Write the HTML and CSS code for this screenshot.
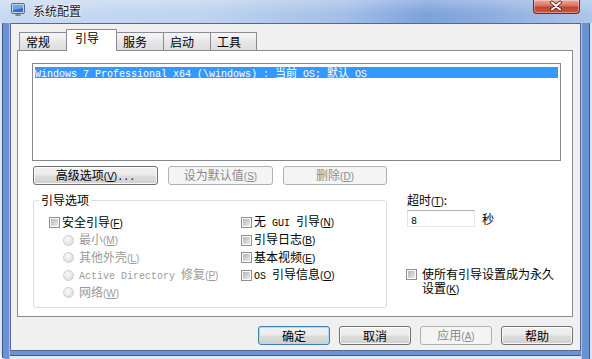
FILE: index.html
```html
<!DOCTYPE html>
<html lang="zh-CN">
<head>
<meta charset="utf-8">
<title>系统配置</title>
<link rel="stylesheet" href="styles.css">
</head>
<body>
<div class="win">
  <div class="titlebar">
    <svg class="appicon" width="14" height="14" viewBox="0 0 14 14">
      <rect x="0.5" y="0.5" width="13" height="10" rx="1.5" fill="#c9d2de" stroke="#5d6b80"/>
      <rect x="2" y="2" width="10" height="7" fill="#2f6fcf"/>
      <path d="M2 2h10v3L2 7z" fill="#6ea6ee"/>
      <path d="M5 11h4l1 2H4z" fill="#7f8a9a"/>
    </svg>
    <span class="title">系统配置</span>
    <div class="close">
      <svg width="47" height="14" viewBox="0 0 47 14">
        <path d="M19 3.5l8 7M27 3.5l-8 7" stroke="#5a1e16" stroke-width="3.6" stroke-linecap="round"/>
        <path d="M19 3.5l8 7M27 3.5l-8 7" stroke="#ffffff" stroke-width="2" stroke-linecap="round"/>
      </svg>
    </div>
  </div>
  <div class="panel">
    <div class="tabs">
      <div class="tab">常规</div>
      <div class="tab sel">引导</div>
      <div class="tab">服务</div>
      <div class="tab">启动</div>
      <div class="tab last">工具</div>
    </div>
    <div class="page">
      <div class="list">
        <div class="item"><span class="mono">Windows 7 Professional x64 (\windows) : </span>当前<span class="mono"> OS; </span>默认<span class="mono"> OS</span></div>
      </div>
      <div class="btnrow">
        <button class="btn w1">高级选项<span class="mn">(<u>V</u>)</span><span class="mono">...</span></button>
        <button class="btn dis w2">设为默认值<span class="mn">(<u>S</u>)</span></button>
        <button class="btn dis w3">删除<span class="mn">(<u>D</u>)</span></button>
      </div>
      <div class="lower">
        <fieldset class="group">
          <legend>引导选项</legend>
          <div class="cols">
            <div class="col1">
              <div class="row"><span class="cb"></span><span class="lbl">安全引导<span class="mn">(<u>F</u>)</span></span></div>
              <div class="row sub"><span class="rb"></span><span class="lbl gray">最小<span class="mn">(<u>M</u>)</span></span></div>
              <div class="row sub"><span class="rb"></span><span class="lbl gray">其他外壳<span class="mn">(<u>L</u>)</span></span></div>
              <div class="row sub"><span class="rb"></span><span class="lbl gray"><span class="mono">Active Directory </span>修复<span class="mn">(<u>P</u>)</span></span></div>
              <div class="row sub"><span class="rb"></span><span class="lbl gray">网络<span class="mn">(<u>W</u>)</span></span></div>
            </div>
            <div class="col2">
              <div class="row"><span class="cb"></span><span class="lbl">无<span class="mono"> GUI </span>引导<span class="mn">(<u>N</u>)</span></span></div>
              <div class="row"><span class="cb"></span><span class="lbl">引导日志<span class="mn">(<u>B</u>)</span></span></div>
              <div class="row"><span class="cb"></span><span class="lbl">基本视频<span class="mn">(<u>E</u>)</span></span></div>
              <div class="row"><span class="cb"></span><span class="lbl"><span class="mono">OS </span>引导信息<span class="mn">(<u>O</u>)</span></span></div>
            </div>
          </div>
        </fieldset>
        <div class="side">
          <div class="tlabel">超时<span class="mn">(<u>T</u>)</span>:</div>
          <div class="trow">
            <div class="input"><span class="mono">8</span></div>
            <span class="sec">秒</span>
          </div>
          <div class="perm">
            <span class="cb"></span>
            <span class="ptext"><span class="pl">使所有引导设置成为永久</span><span class="pl">设置<span class="mn">(<u>K</u>)</span></span></span>
          </div>
        </div>
      </div>
    </div>
    <div class="footer">
      <button class="btn fb def">确定</button>
      <button class="btn fb">取消</button>
      <button class="btn fb dis">应用<span class="mn">(<u>A</u>)</span></button>
      <button class="btn fb">帮助</button>
    </div>
  </div>
</div>
</body>
</html>
```

FILE: styles.css
```css
* { box-sizing: border-box; }
html, body { margin: 0; padding: 0; }
body {
  width: 592px;
  height: 359px;
  overflow: hidden;
  background: #ffffff;
  font-family: "Noto Sans CJK SC", "Liberation Sans", sans-serif;
  font-size: 12px;
  color: #000;
}
.win {
  width: 592px;
  height: 359px;
  display: flex;
  flex-direction: column;
  border-radius: 0 0 0 6px;
  background:
    linear-gradient(to right, #dbe5f3 0 2px, #3b5b8e 2px 3px, #6b92d3 3px 9px, #a9c1e6 9px 10px, transparent 10px),
    linear-gradient(to left, #dbe5f3 0 2px, #3b5b8e 2px 3px, #6b92d3 3px 10px, #a9c1e6 10px 11px, transparent 11px),
    linear-gradient(to top, #e2eaf5 0 3px, #3b5b8e 3px 4px, #6b92d3 4px 8px, transparent 8px),
    #7da0d8;
}
.titlebar {
  height: 23px;
  flex: none;
  display: flex;
  align-items: flex-start;
  background:
    linear-gradient(to bottom, rgba(255,255,255,0.25), rgba(255,255,255,0) 60%),
    linear-gradient(to right, #c8daf1 0%, #bed3ef 35%, #a3bfe7 58%, #7ca1db 72%, #8eaee0 84%, #adc6ea 100%);
}
.appicon { margin: 3px 0 0 11px; flex: none; }
.title {
  margin-left: 8px;
  line-height: 22px;
  font-size: 12px;
  color: #1a1a1a;
  text-shadow: 0 0 4px #fff, 0 0 2px #fff;
}
.close {
  margin-left: auto;
  margin-right: 12px;
  width: 47px;
  height: 14px;
  border: 1px solid #6b2a22;
  border-top: none;
  border-radius: 0 0 4px 4px;
  background: linear-gradient(to bottom, #e9a99b 0%, #d7715f 45%, #c4432f 55%, #c65a3e 100%);
  box-shadow: inset 0 0 0 1px rgba(255,255,255,0.35);
}
.close svg { display: block; margin: -1px 0 0 -1px; }

.panel {
  flex: 1;
  margin: 0 11px 8px 10px;
  background: #f0f0f0;
  border: 1px solid #56698c;
  display: flex;
  flex-direction: column;
  padding: 0 7px 0 6px;
}
.tabs {
  height: 26px;
  flex: none;
  display: flex;
  align-items: flex-start;
  padding: 5px 0 0 2px;
}
.tab {
  margin-top: 3px;
  height: 18px;
  width: 48px;
  border: 1px solid #898c95;
  border-bottom: none;
  background: linear-gradient(to bottom, #f6f6f6, #e6e6e6 55%, #dcdcdc);
  padding-left: 6px;
  line-height: 17px;
  font-size: 12px;
  border-radius: 1px 1px 0 0;
}
.tab + .tab { margin-left: -1px; }
.tab.sel {
  margin-top: 0;
  height: 22px;
  width: 51px;
  background: #fff;
  position: relative;
  z-index: 1;
  padding: 1px 0 0 8px;
  line-height: 14px;
}
.tab.last { width: 47px; }

.page {
  height: 267px;
  flex: none;
  border: 1px solid #898c95;
  background: #fff;
  padding: 12px 11px 0 14px;
}
.list {
  height: 98px;
  border: 1px solid #828790;
  padding: 3px 2px 0 2px;
}
.item {
  height: 11px;
  background: #3399ff;
  color: #fff;
  font-size: 11px;
  line-height: 11px;
  white-space: nowrap;
}
.mono {
  font-family: "Liberation Mono", monospace;
  font-size: 10px;
  white-space: pre;
}
.mn {
  font-family: "Liberation Sans", sans-serif;
  font-size: 10px;
}
.btnrow {
  display: flex;
  gap: 10px;
  margin: 5px 0 0 1px;
}
.btn {
  height: 19px;
  padding: 0;
  border: 1px solid #707070;
  border-radius: 3px;
  background: linear-gradient(to bottom, #f2f2f2 0%, #ebebeb 48%, #dddddd 52%, #cfcfcf 100%);
  box-shadow: inset 0 0 0 1px rgba(255,255,255,0.8);
  font-family: "Noto Sans CJK SC", "Liberation Sans", sans-serif;
  font-size: 12px;
  line-height: 16px;
  color: #000;
  white-space: nowrap;
}
.btn.dis {
  border-color: #adb2b5;
  background: #f4f4f4;
  box-shadow: none;
  color: #8b8b8b;
}
.btn.def {
  border-color: #3c7fb1;
  box-shadow: inset 0 0 0 1px #9fe2f8;
}
.w1 { width: 125px; }
.w2 { width: 105px; }
.w3 { width: 104px; }

.lower {
  display: flex;
  margin-top: 8px;
}
.group {
  margin: 0 0 0 1px;
  width: 354px;
  height: 115px;
  border: 1px solid #d5dfe5;
  border-radius: 3px;
  padding: 7px 0 0 15px;
  min-width: 0;
}
.group legend {
  margin-left: -10px;
  padding: 0 2px;
  line-height: 14px;
  font-size: 12px;
}
.cols { display: flex; }
.col1 { width: 192px; }
.row {
  height: 17.5px;
  display: flex;
  align-items: center;
  white-space: nowrap;
}
.row.sub { padding-left: 14px; }
.lbl { margin-left: 2px; line-height: 14px; }
.row.sub .lbl { margin-left: 5px; }
.gray { color: #9a9a9a; }
.cb {
  flex: none;
  width: 11px;
  height: 11px;
  border: 1px solid #8e8f8f;
  padding: 1px;
  background: linear-gradient(135deg, #b4b4b4, #ececec) content-box, #fcfcfc;
}
.rb {
  flex: none;
  width: 11px;
  height: 11px;
  border-radius: 50%;
  border: 1px solid #c9cdd2;
  background: radial-gradient(circle at 40% 35%, #fbfbfb, #e2e2e2 70%);
}
.side {
  margin-left: 20px;
  width: 150px;
}
.tlabel { line-height: 14px; }
.trow {
  display: flex;
  margin-top: 1px;
}
.input {
  width: 68px;
  height: 17px;
  border: 1px solid;
  border-color: #abadb3 #e3e9ef #e3e9ef #e2e3ea;
  background: #fff;
  padding-left: 3px;
  line-height: 15px;
}
.sec { margin-left: 7px; line-height: 17px; }
.perm {
  display: flex;
  align-items: flex-start;
  margin-top: 40px;
  margin-left: -1px;
}
.perm .cb { margin-top: 2px; }
.ptext {
  margin-left: 5px;
  width: 140px;
  display: flex;
  flex-direction: column;
}
.pl {
  display: block;
  height: 14px;
  line-height: 14px;
  white-space: nowrap;
}
.pl + .pl { margin-top: -1px; height: 14px; line-height: 15px; }
.footer {
  display: flex;
  justify-content: flex-end;
  gap: 9px;
  padding-top: 9px;
}
.fb { width: 72px; }
```
